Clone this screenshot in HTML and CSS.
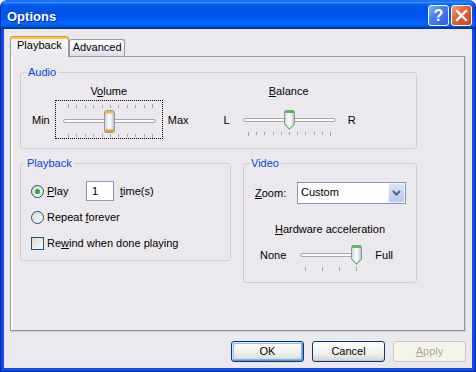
FILE: index.html
```html
<!DOCTYPE html>
<html lang="en">
<head>
    <meta charset="UTF-8">
    <meta name="viewport" content="width=device-width, initial-scale=1.0">
    <title>Options</title>
    <link rel="stylesheet" href="styles.css">
</head>
<body>
    <div class="window">
        <div class="titlebar">
            <span class="title">Options</span>
            <div class="title-buttons">
                <div class="tb-btn help">?</div>
                <div class="tb-btn close">
                    <svg width="19" height="19" viewBox="0 0 19 19">
                        <path d="M5 5L14 14M14 5L5 14" stroke="#fff" stroke-width="2.4" stroke-linecap="square"/>
                    </svg>
                </div>
            </div>
        </div>

        <div class="client">
            <div class="tabs">
                <div class="tab active">Playback</div>
                <div class="tab">Advanced</div>
            </div>

            <div class="panel">
                <fieldset class="group audio">
                    <legend>Audio</legend>
                    <div class="audio-row">
                        <div class="slider-block">
                            <span class="caption">V<u>o</u>lume</span>
                            <span class="end">Min</span>
                            <div class="slider focused">
                                <svg width="108" height="39" viewBox="0 0 108 39">
                                    <defs>
                                        <linearGradient id="thumbVol" x1="0" y1="0" x2="1" y2="0">
                                            <stop offset="0" stop-color="#c9ccd6"/>
                                            <stop offset="0.45" stop-color="#ffffff"/>
                                            <stop offset="0.65" stop-color="#f2f2f6"/>
                                            <stop offset="1" stop-color="#aeb3c0"/>
                                        </linearGradient>
                                    </defs>
                                    <path d="M13.5 4v4M21.5 5v3M30.5 5v3M38.5 5v3M47.5 5v3M55.5 5v3M63.5 5v3M72.5 5v3M80.5 5v3M89.5 5v3M97.5 4v4" stroke="#a2a2a2"/>
                                    <path d="M13.5 34v4M21.5 34v3M30.5 34v3M38.5 34v3M47.5 34v3M55.5 34v3M63.5 34v3M72.5 34v3M80.5 34v3M89.5 34v3M97.5 34v4" stroke="#a2a2a2"/>
                                    <rect x="8.5" y="19.5" width="92" height="3" rx="1.5" fill="#fbfbf9" stroke="#a8a8a6"/>
                                    <g transform="translate(49 10)">
                                        <rect x="0.5" y="0.5" width="10" height="22" rx="2" fill="url(#thumbVol)" stroke="#8e96a6"/>
                                        <rect x="1" y="1" width="9" height="2.5" fill="#f6b93f"/>
                                        <rect x="1" y="19.5" width="9" height="2.5" fill="#e9a021"/>
                                    </g>
                                </svg>
                            </div>
                            <span class="end">Max</span>
                        </div>

                        <div class="slider-block balance">
                            <span class="caption"><u>B</u>alance</span>
                            <span class="end">L</span>
                            <div class="slider">
                                <svg width="108" height="39" viewBox="0 0 108 39">
                                    <defs>
                                        <linearGradient id="thumbBal" x1="0" y1="0" x2="1" y2="0">
                                            <stop offset="0" stop-color="#cdd0da"/>
                                            <stop offset="0.45" stop-color="#ffffff"/>
                                            <stop offset="0.65" stop-color="#f2f2f6"/>
                                            <stop offset="1" stop-color="#b2b7c4"/>
                                        </linearGradient>
                                    </defs>
                                    <rect x="8.5" y="18.5" width="92" height="3" rx="1.5" fill="#fbfbf9" stroke="#a8a8a6"/>
                                    <g transform="translate(49 10)">
                                        <path d="M0.5 2.5Q0.5 0.5 2.5 0.5H8.5Q10.5 0.5 10.5 2.5V14L5.5 19.5L0.5 14Z" fill="url(#thumbBal)" stroke="#8e96a6"/>
                                        <path d="M1 1.8H10" stroke="#4cc04c" stroke-width="2.4"/>
                                        <path d="M1 14.3L5.5 19L10 14.3" stroke="#52c452" fill="none"/>
                                    </g>
                                    <path d="M13.5 32v4M21.5 32v3M29.5 32v3M38.5 32v3M46.5 32v3M54.5 32v3M62.5 32v3M70.5 32v3M79.5 32v3M87.5 32v3M95.5 32v4" stroke="#a2a2a2"/>
                                </svg>
                            </div>
                            <span class="end">R</span>
                        </div>
                    </div>
                </fieldset>

                <fieldset class="group playback">
                    <legend>Playback</legend>
                    <div class="row">
                        <label class="option opt-play">
                            <svg width="13" height="13" viewBox="0 0 13 13">
                                <defs>
                                    <linearGradient id="radio1" x1="0" y1="0" x2="1" y2="1">
                                        <stop offset="0" stop-color="#d8d8d4"/>
                                        <stop offset="1" stop-color="#ffffff"/>
                                    </linearGradient>
                                </defs>
                                <circle cx="6.5" cy="6.5" r="6" fill="url(#radio1)" stroke="#1c5180"/>
                                <circle cx="6.5" cy="6.5" r="2.6" fill="#2fae2f"/>
                            </svg>
                            <span><u>P</u>lay</span>
                        </label>
                        <div class="num">1</div>
                        <span class="times"><u>t</u>ime(s)</span>
                    </div>
                    <div class="row">
                        <label class="option">
                            <svg width="13" height="13" viewBox="0 0 13 13">
                                <defs>
                                    <linearGradient id="radio2" x1="0" y1="0" x2="1" y2="1">
                                        <stop offset="0" stop-color="#d8d8d4"/>
                                        <stop offset="1" stop-color="#ffffff"/>
                                    </linearGradient>
                                </defs>
                                <circle cx="6.5" cy="6.5" r="6" fill="url(#radio2)" stroke="#1c5180"/>
                            </svg>
                            <span>Repeat <u>f</u>orever</span>
                        </label>
                    </div>
                    <div class="row">
                        <label class="option">
                            <svg width="13" height="13" viewBox="0 0 13 13">
                                <defs>
                                    <linearGradient id="check1" x1="0" y1="0" x2="1" y2="1">
                                        <stop offset="0" stop-color="#d6d6d0"/>
                                        <stop offset="1" stop-color="#ffffff"/>
                                    </linearGradient>
                                </defs>
                                <rect x="0.5" y="0.5" width="12" height="12" fill="url(#check1)" stroke="#1c5180"/>
                            </svg>
                            <span>Re<u>w</u>ind when done playing</span>
                        </label>
                    </div>
                </fieldset>

                <fieldset class="group video">
                    <legend>Video</legend>
                    <div class="zoom-row">
                        <span class="zoom-label"><u>Z</u>oom:</span>
                        <div class="combo">
                            <span class="combo-value">Custom</span>
                            <span class="combo-btn">
                                <svg width="9" height="6" viewBox="0 0 9 6">
                                    <path d="M1 1L4.5 4.5L8 1" fill="none" stroke="#4d6185" stroke-width="2"/>
                                </svg>
                            </span>
                        </div>
                    </div>
                    <div class="hw-caption"><u>H</u>ardware acceleration</div>
                    <div class="hw-row">
                        <span>None</span>
                        <svg width="72" height="32" viewBox="0 0 72 32">
                            <defs>
                                <linearGradient id="thumbHw" x1="0" y1="0" x2="1" y2="0">
                                    <stop offset="0" stop-color="#cdd0da"/>
                                    <stop offset="0.45" stop-color="#ffffff"/>
                                    <stop offset="0.65" stop-color="#f2f2f6"/>
                                    <stop offset="1" stop-color="#b2b7c4"/>
                                </linearGradient>
                            </defs>
                            <rect x="8.5" y="9.5" width="55" height="3" rx="1.5" fill="#fbfbf9" stroke="#a8a8a6"/>
                            <g transform="translate(59 1)">
                                <path d="M0.5 2.5Q0.5 0.5 2.5 0.5H8.5Q10.5 0.5 10.5 2.5V14L5.5 19.5L0.5 14Z" fill="url(#thumbHw)" stroke="#8e96a6"/>
                                <path d="M1 1.8H10" stroke="#4cc04c" stroke-width="2.4"/>
                                <path d="M1 14.3L5.5 19L10 14.3" stroke="#52c452" fill="none"/>
                            </g>
                            <path d="M13.5 23v4M30.5 23v4M47.5 23v4M64.5 23v4" stroke="#a2a2a2"/>
                        </svg>
                        <span class="full">Full</span>
                    </div>
                </fieldset>
            </div>

            <div class="actions">
                <div class="btn default">OK</div>
                <div class="btn">Cancel</div>
                <div class="btn disabled"><u>A</u>pply</div>
            </div>
        </div>
    </div>
</body>
</html>
```

FILE: styles.css
```css
* {
    box-sizing: border-box;
}
body {
    margin: 0;
    background: #fff;
    font-family: 'Liberation Sans', Arial, sans-serif;
    font-size: 11px;
    line-height: 13px;
    color: #000;
}
.window {
    width: 476px;
    height: 372px;
    display: flex;
    flex-direction: column;
    background: #0c4fe0;
    border: 1px solid #0020a8;
    border-top-color: #2a6cf0;
    border-radius: 7px 7px 0 0;
    overflow: hidden;
}
.titlebar {
    height: 28px;
    flex: none;
    display: flex;
    justify-content: space-between;
    padding: 0 3px 0 6px;
    background: linear-gradient(to bottom, #0058ee 0%, #3593ff 4%, #288eff 6%, #127dff 8%, #036ffc 10%, #0262ee 14%, #0057e5 20%, #0054e3 24%, #0055eb 56%, #005bf5 66%, #026afe 76%, #0062ef 86%, #0052d6 92%, #0040ab 94%, #003092 100%);
}
.title {
    margin-top: 8px;
    font-size: 13px;
    font-weight: bold;
    line-height: 15px;
    color: #fff;
    text-shadow: 1px 1px 0 #0a1c8c;
}
.title-buttons {
    display: flex;
    gap: 2px;
    margin-top: 4px;
}
.tb-btn {
    width: 21px;
    height: 21px;
    border: 1px solid #fff;
    border-radius: 3px;
    display: flex;
    align-items: center;
    justify-content: center;
}
.help {
    background: linear-gradient(135deg, #8db2fb 0%, #4a80f4 40%, #2a5fe4 100%);
    color: #fff;
    font-size: 16px;
    font-weight: bold;
    line-height: 19px;
}
.close {
    background: linear-gradient(135deg, #f5a080 0%, #e4643e 40%, #c8441f 100%);
}
.client {
    flex: 1;
    margin: 0 3px 3px;
    padding: 7px 6px 6px 6px;
    background: #ebe9ed;
    display: flex;
    flex-direction: column;
}
.tabs {
    height: 20px;
    display: flex;
    align-items: flex-end;
}
.tab {
    height: 17px;
    padding: 1px 2px 0 3px;
    border: 1px solid #919b9c;
    border-bottom: none;
    border-radius: 3px 3px 0 0;
    background: linear-gradient(#ffffff, #f4f4f8 45%, #d9dded);
}
.tab.active {
    height: 21px;
    margin-bottom: -1px;
    padding: 2px 6px 0 6px;
    border-top-color: #e68b2c;
    background: linear-gradient(#fbfbfc, #ebe9ed);
    box-shadow: inset 0 2px 0 #ffc73c;
    position: relative;
    z-index: 1;
}
.panel {
    height: 275px;
    margin-right: 1px;
    padding: 9px 0 0 9px;
    border: 1px solid #919b9c;
    box-shadow: inset 2px 0 0 #fbfbfc, 1px 1px 0 #cfcdd3;
    display: grid;
    grid-template-columns: 211px 174px;
    column-gap: 12px;
    row-gap: 8px;
    align-content: start;
    align-items: start;
}
.group {
    margin: 0;
    min-width: 0;
    border: 1px solid #d0ced3;
    border-radius: 3px;
}
.group legend {
    margin-left: -6px;
    padding: 0 2px;
    color: #0046d5;
}
.audio {
    grid-column: 1 / 3;
    padding: 6px 0 9px 11px;
}
.audio-row {
    display: flex;
    gap: 35px;
}
.slider-block {
    display: grid;
    grid-template-columns: auto 108px auto;
    column-gap: 5px;
}
.caption {
    grid-row: 1;
    grid-column: 2;
    text-align: center;
    margin-bottom: 2px;
}
.end,
.slider {
    grid-row: 2;
}
.end {
    align-self: center;
    margin-top: 2px;
}
.slider {
    height: 39px;
}
.slider svg {
    display: block;
}
.slider.focused {
    outline: 1px dotted #000;
    outline-offset: -1px;
}
.playback {
    padding: 11px 0 7px 10px;
}
.row {
    height: 20px;
    display: flex;
    align-items: center;
}
.row + .row {
    margin-top: 6px;
}
.option {
    display: flex;
    align-items: center;
    gap: 3px;
}
.option svg {
    display: block;
}
.opt-play {
    width: 55px;
}
.num {
    width: 28px;
    height: 20px;
    padding-left: 5px;
    border: 1px solid #7f9db9;
    background: #fff;
    line-height: 18px;
}
.times {
    margin-left: 6px;
}
.video {
    padding: 12px 0 6px 11px;
}
.zoom-row {
    display: flex;
    align-items: center;
    height: 22px;
}
.zoom-label {
    width: 42px;
}
.combo {
    width: 109px;
    height: 22px;
    display: flex;
    border: 1px solid #7f9db9;
    background: #fff;
}
.combo-value {
    flex: 1;
    padding-left: 3px;
    line-height: 19px;
}
.combo-btn {
    width: 17px;
    display: flex;
    align-items: center;
    justify-content: center;
    border: 1px solid #eef2fc;
    border-radius: 2px;
    background: linear-gradient(#dbe4f6, #b9c9ea);
}
.hw-caption {
    margin-top: 19px;
    margin-left: -11px;
    text-align: center;
}
.hw-row {
    display: flex;
    align-items: flex-start;
    margin-top: 8px;
    padding-left: 5px;
}
.hw-row span {
    margin-top: 5px;
    margin-right: 6px;
}
.hw-row svg {
    display: block;
}
.hw-row .full {
    margin-left: 11px;
}
.actions {
    display: flex;
    justify-content: flex-end;
    gap: 8px;
    margin-top: 10px;
}
.btn {
    width: 73px;
    height: 21px;
    border: 1px solid #003c74;
    border-radius: 3px;
    background: linear-gradient(#ffffff, #f0f0ea 60%, #d6d3cc);
    text-align: center;
    line-height: 19px;
    box-shadow: inset 0 -1px 0 #c9c6d8;
}
.btn.default {
    box-shadow: inset 1px 1px 0 #cee7ff, inset -1px -1px 0 #6b94dc, inset 2px 2px 0 #98b8ea, inset -2px -2px 0 #89ade4;
}
.btn.disabled {
    border-color: #c9c7ba;
    background: #f5f4ea;
    color: #aca899;
    box-shadow: none;
}
```
